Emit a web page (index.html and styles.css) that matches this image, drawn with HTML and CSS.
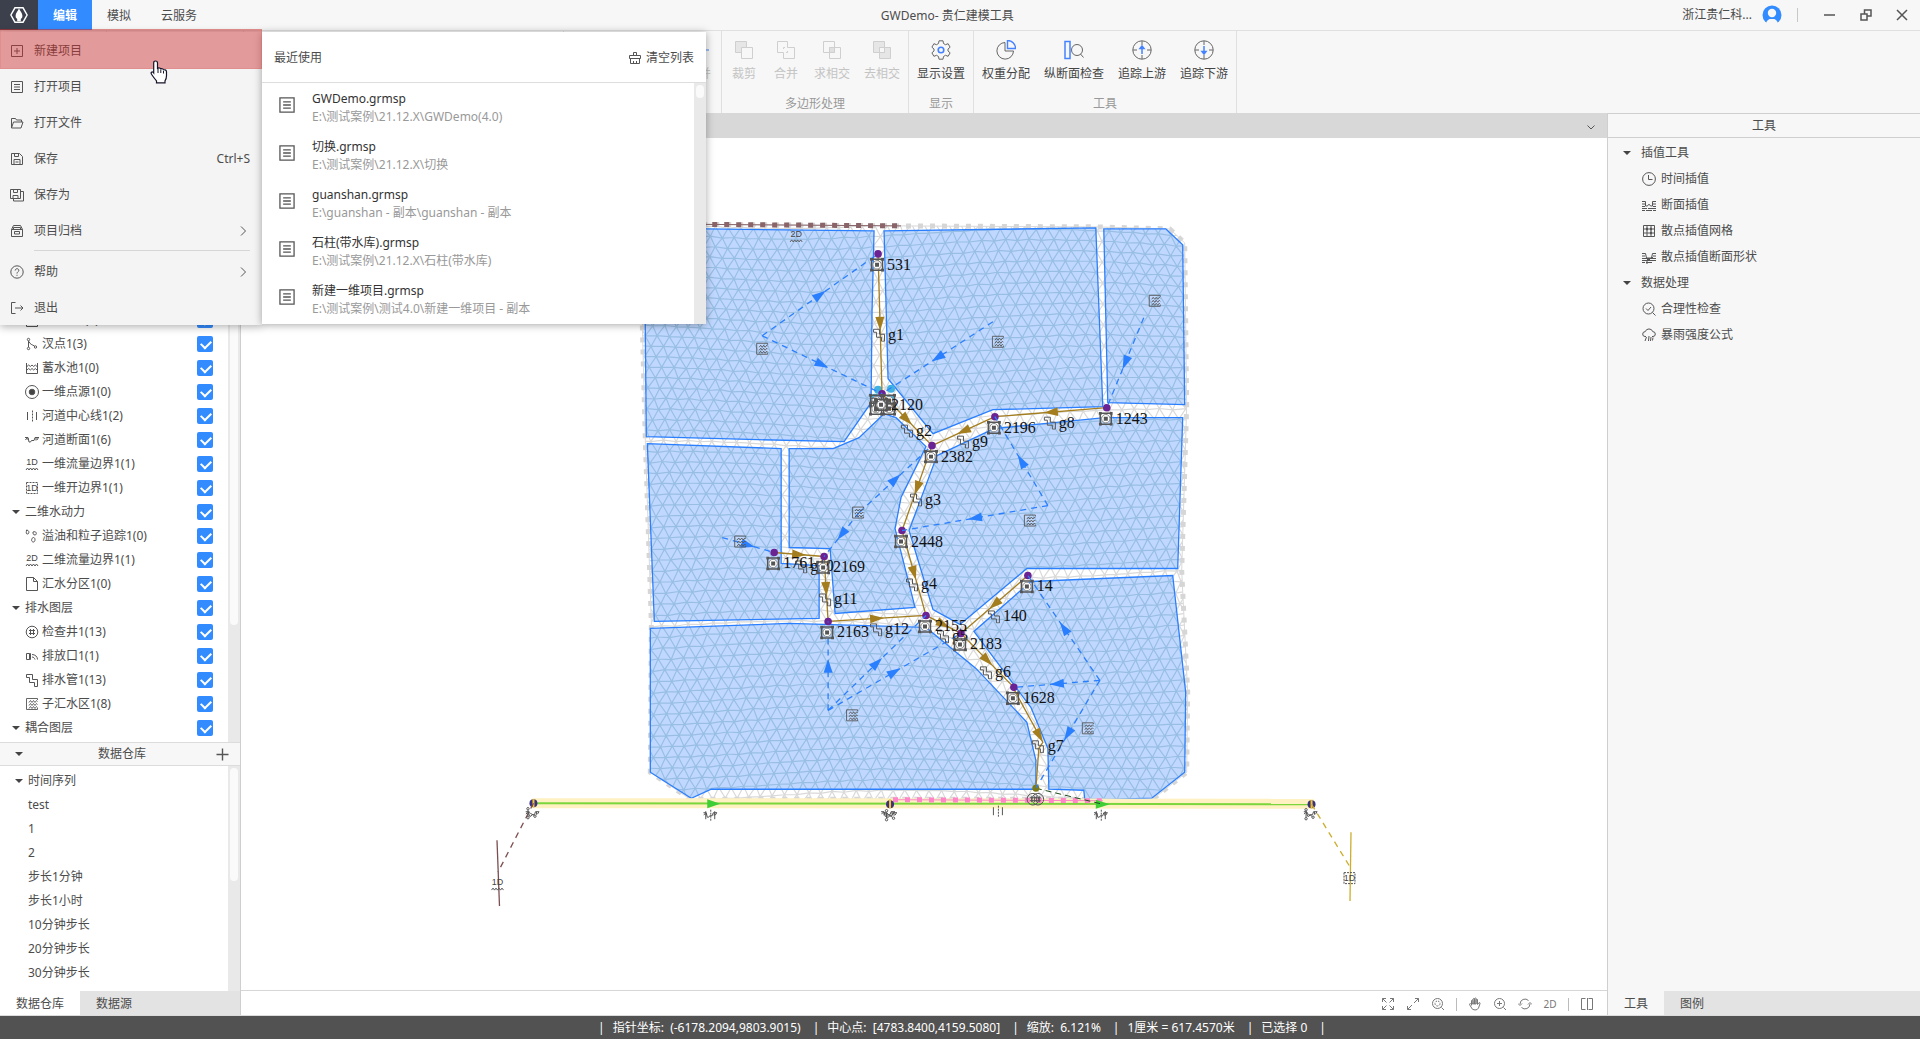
FILE: index.html
```html
<!DOCTYPE html>
<html lang="zh-CN">

<head>
    <meta charset="UTF-8">
    <meta name="viewport" content="width=device-width, initial-scale=1.0">
    <title>GWDemo- 贵仁建模工具</title>
    <link rel="stylesheet" href="styles.css">
</head>

<body>
    <!-- 图标库 -->
    <svg class="sprite" aria-hidden="true">
        <symbol id="i-logo" viewBox="0 0 20 20"><path d="M5.500 2h9L19 10l-4.500 8h-9L1 10z" fill="none" stroke="#fff" stroke-width="1.600"/><path d="M10 2.500c1 3 3.800 5 3.800 8.500a3.800 3.800 0 0 1-1.800 3.500V17H8v-2.500A3.800 3.800 0 0 1 6.200 11C6.200 7.500 9 5.500 10 2.500z" fill="#fff" stroke="none"/></symbol>
        <symbol id="i-new" viewBox="0 0 14 14"><path d="M1.500 1.500h11v11h-11zM7 4v6M4 7h6"/></symbol>
        <symbol id="i-doc" viewBox="0 0 14 14"><path d="M1.500 1.500h11v11h-11zM4 4.500h6M4 7h6M4 9.500h6"/></symbol>
        <symbol id="i-folder" viewBox="0 0 14 14"><path d="M1.500 12V2.500h4l1 1.500h5v2M1.500 12l2-6h9.500l-2 6z"/></symbol>
        <symbol id="i-save" viewBox="0 0 14 14"><path d="M1.500 1.500h8l3 3v8h-11zM4.500 1.500v3h4v-3M4 12.500V7.500h6v5M5.500 10h3"/></symbol>
        <symbol id="i-saveas" viewBox="0 0 14 14"><path d="M.5 1.500h10v9H.5zM3.500 1.500v3h4v-3M3 10.500v-3h5v3M10.500 3.500h3v9.500h-10v-2"/></symbol>
        <symbol id="i-archive" viewBox="0 0 14 14"><path d="M1.500 5.500h11v7h-11zM1.500 5.500l2-4h7l2 4M3.500 5V3.500h7V5M4.500 7.500h5v2.500h-5z"/></symbol>
        <symbol id="i-help" viewBox="0 0 14 14"><circle cx="7" cy="7" r="6.200"/><path d="M5.200 5.500c0-2.400 3.700-2.300 3.600-.1C8.800 6.800 7 6.800 7 8.500M7 9.800v1"/></symbol>
        <symbol id="i-exit" viewBox="0 0 14 14"><path d="M5.500 1.500h-4v11h4M5 7h8M10.500 4.500L13 7l-2.500 2.500"/></symbol>
        <symbol id="i-broom" viewBox="0 0 14 14"><path d="M5.500 4.500v-3h3v3M1.500 4.500h11v3h-11zM2.500 7.500v5h9v-5M5.500 12.500V10M8.500 12.500V10"/></symbol>
        <symbol id="i-right" viewBox="0 0 14 14"><path d="M5 2.500L9.500 7 5 11.500"/></symbol>
        <symbol id="i-down" viewBox="0 0 14 14"><path d="M3.500 5.500L7 9l3.500-3.500"/></symbol>
        <symbol id="i-plus" viewBox="0 0 14 14"><path d="M7.500 1.500v12M1.500 7.500h12" stroke-width="1.400"/></symbol>
        <!-- 图层 -->
        <symbol id="i-fork" viewBox="0 0 14 14"><circle cx="3.500" cy="2.500" r="1.200"/><circle cx="3.500" cy="11.500" r="1.200"/><circle cx="10.500" cy="10" r="1.200"/><path d="M3.500 4v6M4 4.500c1 3 3 3 5.500 4.500"/></symbol>
        <symbol id="i-pond" viewBox="0 0 14 14"><path d="M1.500 2v10.500h11V2M2 5.500l1.700-1.500L5.300 5.500 7 4l1.700 1.500L10.300 4 12 5.500M2 9l1.700-1.500L5.300 9 7 7.500 8.700 9l1.600-1.500L12 9"/></symbol>
        <symbol id="i-point" viewBox="0 0 14 14"><circle cx="7" cy="7" r="6.500"/><circle cx="7" cy="7" r="2.800" fill="#444"/></symbol>
        <symbol id="i-center" viewBox="0 0 14 14"><path d="M2.500 3v8M11.500 3v8"/><path d="M7.500 1.500v11" stroke-dasharray="2 1"/></symbol>
        <symbol id="i-section" viewBox="0 0 14 14"><path d="M0 4.500h3l1 4.500h1.500l1-1.500H9l1-3h4M.5 7l1.500-2M3 7V5M11 4.500v3M13.500 4.500L12 7"/></symbol>
        <symbol id="i-1d" viewBox="0 0 14 14"><text x="7" y="8" class="tiny">1D</text><path d="M1 13l1.500-2L4 13l1.500-2L7 13l1.500-2 1.500 2 1.500-2 1.500 2"/></symbol>
        <symbol id="i-2d" viewBox="0 0 14 14"><text x="7" y="8" class="tiny">2D</text><path d="M1 13l1.500-2L4 13l1.500-2L7 13l1.500-2 1.500 2 1.500-2 1.500 2"/></symbol>
        <symbol id="i-1dbox" viewBox="0 0 14 14"><path d="M1.500 1.500h11v11h-11z" stroke-dasharray="2 1"/><text x="7" y="10" class="tiny">1D</text></symbol>
        <symbol id="i-oil" viewBox="0 0 14 14"><path d="M1.500 1c3 0 3 4 1 4s-1-2-1-4zM8 3c4-1.500 4 3 2 3s-2-1.500-2-3zM8.500 8.500c2 0 2 4.500 0 4.500-3 0-2-4.500 0-4.500z"/></symbol>
        <symbol id="i-page" viewBox="0 0 14 14"><path d="M1.500.5h7l4 4v9h-11zM8.500.5v4h4"/></symbol>
        <symbol id="i-well" viewBox="0 0 14 14"><circle cx="7" cy="7" r="5.800"/><path d="M5.500 4v6M8.500 4v6M4 5.500h6M4 8.500h6"/></symbol>
        <symbol id="i-outlet" viewBox="0 0 14 14"><path d="M1.500 4.500h3v6h-3zM4.500 4.500h1v6h-1M7 5.500c3 0 5.500 2 5.500 5M7 8c1.500 0 2.500 1 3 2.500"/></symbol>
        <symbol id="i-pipe" viewBox="0 0 14 14"><path d="M1.500 1.500h6v5h5v7M1.500 1.500v3h3v5h5v4M9.500 13.500h3"/></symbol>
        <symbol id="i-catch" viewBox="0 0 14 14"><path d="M12.500 3V1.500h-11v11h11V11M4 5.500l1.500-2L7 5.500l1.500-2 1.500 2 1.500-2 1 1M4 8.500l1.500-2L7 8.500l1.500-2 1.500 2 1.500-2 1 1M4 11.500l1.500-2L7 11.500l1.500-2 1.500 2 1.500-2 1 1" stroke-width=".9"/></symbol>
        <!-- 工具 -->
        <symbol id="i-clock" viewBox="0 0 14 14"><circle cx="7" cy="7" r="6.400"/><path d="M6.500 3v4.500h4"/></symbol>
        <symbol id="i-interp" viewBox="0 0 14 14"><path d="M0 3.500h3.500v4.500h2l1-1.500h1l1 1.500h2V3.500H14M0 6h3M11 6h3M0 8.500h3M11 8.500h3M0 10.500h5M6 10.500h8M0 12.500h3M4 12.500h6M11 12.500h3"/></symbol>
        <symbol id="i-grid" viewBox="0 0 14 14"><path d="M1.500 1.500h11v11h-11zM5 1.500v11M9 1.500v11M1.500 5h11M1.500 9h11"/><path d="M4 5h2M8 9h2M8 5h2" stroke-width="2.500"/></symbol>
        <symbol id="i-scatter" viewBox="0 0 14 14"><path d="M0 3.500h3.500l1 4.500h5l1-4.500H14M0 6h3M11 6h3M0 8.500h14M0 10.500h14M0 12.500h3M4 12.500h6M5 11v3"/><path d="M5 10h3M9 8h2" stroke-width="2"/></symbol>
        <symbol id="i-check" viewBox="0 0 14 14"><circle cx="6.500" cy="6.500" r="5.500"/><path d="M4 6.500l2 2 3-3.500M10.500 10.500l3 3"/></symbol>
        <symbol id="i-rain" viewBox="0 0 14 14"><path d="M4 8.500H3a2.400 2.400 0 0 1 .2-4.800 4 4 0 0 1 7.600 0 2.400 2.400 0 0 1 .2 4.800h-1M4.500 9L3 13M7 8l-.5 5M9 9l-.5 4M11 9.500l-.5 3"/></symbol>
        <!-- 视图 -->
        <symbol id="i-full" viewBox="0 0 14 14"><path d="M1.500 5V1.500H5M1.500 1.500l4 4M9 1.500h3.500V5M12.500 1.500l-4 4M1.500 9v3.500H5M1.500 12.500l4-4M9 12.500h3.500V9M12.500 12.500l-4-4"/></symbol>
        <symbol id="i-expand" viewBox="0 0 14 14"><path d="M9 1.500h3.500V5M12.500 1.500l-4.500 4.500M1.500 9v3.500H5M1.500 12.500L6 8"/></symbol>
        <symbol id="i-target" viewBox="0 0 14 14"><circle cx="6.500" cy="6.500" r="5"/><circle cx="6.500" cy="6.500" r="2.500" stroke-dasharray="2 1"/><path d="M10.500 10.500l2.500 2.500"/></symbol>
        <symbol id="i-hand" viewBox="0 0 14 14"><path d="M3.500 8.500V3.500q1-1 1.500 0V7M5 7V2q1-1 1.500 0v5M6.500 7V1.500q1-1 1.500 0V7M8 7V2.500q1-1 1.500 0V7.500l1.500-1.800q1.500-.2 1 1L10.500 11q-1 2-3.500 2-3 0-4-3L1.500 7.500q0-1 1-.8z"/></symbol>
        <symbol id="i-zoomin" viewBox="0 0 14 14"><circle cx="6.500" cy="6.500" r="5"/><path d="M10.500 10.500l2.500 2.500M6.500 4v5M4 6.500h5"/></symbol>
        <symbol id="i-rotate" viewBox="0 0 14 14"><path d="M2 7a5 5 0 0 1 8.500-3.500M12 7a5 5 0 0 1-8.500 3.500M0 6.500l2 2 2-2M10 7.500l2-2 2 2"/></symbol>
        <symbol id="i-split" viewBox="0 0 14 14"><path d="M5.500 1.500h-4v11h4M8.500 1.500h4v11h-4M7.500 1v12"/></symbol>
        <symbol id="i-manhole" viewBox="0 0 14 14"><path d="M1.500 1.500h11v11h-11z" stroke-width="1.500"/><circle cx="7" cy="7" r="4.200" fill="#fff" stroke="#888"/><path d="M5 5h4v4H5zM0 0h3v3H0zM11 0h3v3h-3zM0 11h3v3H0zM11 11h3v3h-3z" fill="#555" stroke="none"/></symbol>
    </svg>

    <header class="titlebar">
        <span class="logo"><svg><use href="#i-logo"/></svg></span>
        <nav class="menubar">
            <button type="button" class="current">编辑</button>
            <button type="button">模拟</button>
            <button type="button">云服务</button>
        </nav>
        <h1>GWDemo- 贵仁建模工具</h1>
        <div class="account">
            <span>浙江贵仁科...</span>
            <svg class="avatar" viewBox="0 0 20 20"><circle cx="10" cy="10" r="9.500" fill="#338cff"/><path d="M4 20c0-4 2-5 3.500-6h5c1.500 1 3.500 2 3.500 6z" fill="#f7f7f7"/><circle cx="10" cy="8" r="4.200" fill="#f7f7f7"/></svg>
        </div>
        <div class="win-btns">
            <button type="button" aria-label="最小化"><svg viewBox="0 0 12 12"><path d="M0 6h11"/></svg></button>
            <button type="button" aria-label="还原"><svg viewBox="0 0 12 12"><path d="M1 5h6v6H1zM4.500 5V1H11v6H7"/></svg></button>
            <button type="button" aria-label="关闭"><svg viewBox="0 0 12 12"><path d="M1 1l10 10M11 1L1 11"/></svg></button>
        </div>

        <!-- 编辑菜单 -->
        <div class="menu">
            <ul class="commands">
                <li class="hot"><a href="#"><svg><use href="#i-new"/></svg>新建项目</a></li>
                <li><a href="#"><svg><use href="#i-doc"/></svg>打开项目</a></li>
                <li><a href="#"><svg><use href="#i-folder"/></svg>打开文件</a></li>
                <li><a href="#"><svg><use href="#i-save"/></svg>保存<kbd>Ctrl+S</kbd></a></li>
                <li><a href="#"><svg><use href="#i-saveas"/></svg>保存为</a></li>
                <li><a href="#"><svg><use href="#i-archive"/></svg>项目归档<svg class="more"><use href="#i-right"/></svg></a></li>
                <li class="line"></li>
                <li><a href="#"><svg><use href="#i-help"/></svg>帮助<svg class="more"><use href="#i-right"/></svg></a></li>
                <li><a href="#"><svg><use href="#i-exit"/></svg>退出</a></li>
            </ul>
            <section class="recent">
                <div class="recent-head">
                    <h2>最近使用</h2>
                    <button type="button"><svg><use href="#i-broom"/></svg>清空列表</button>
                </div>
                <div class="recent-body">
                    <ul>
                        <li><svg><use href="#i-doc"/></svg><a href="#">GWDemo.grmsp<small>E:\测试案例\21.12.X\GWDemo(4.0)</small></a></li>
                        <li><svg><use href="#i-doc"/></svg><a href="#">切换.grmsp<small>E:\测试案例\21.12.X\切换</small></a></li>
                        <li><svg><use href="#i-doc"/></svg><a href="#">guanshan.grmsp<small>E:\guanshan - 副本\guanshan - 副本</small></a></li>
                        <li><svg><use href="#i-doc"/></svg><a href="#">石柱(带水库).grmsp<small>E:\测试案例\21.12.X\石柱(带水库)</small></a></li>
                        <li><svg><use href="#i-doc"/></svg><a href="#">新建一维项目.grmsp<small>E:\测试案例\测试4.0\新建一维项目 - 副本</small></a></li>
                    </ul>
                    <div class="scroll"><i class="thumb-recent"></i></div>
                </div>
            </section>
            <svg class="cursor" viewBox="0 0 18 24"><path d="M5.500 1q2 0 2 2v6q.5-1.500 2-1t1 1.500q.5-1.200 1.800-.8t1.200 1.600q.5-.8 1.700-.4t1.300 1.900v4q0 3-1.500 5v2H6.500v-2Q4 18 2 15q-1.500-2-.5-2.800t2.200.8V3q0-2 1.800-2z" fill="#fff" stroke="#14142a" stroke-width="1.200"/><path d="M8 9v4M10.800 10v3M13.500 11v2.500" stroke="#14142a"/></svg>
        </div>
    </header>

    <div class="ribbon">
        <div class="group w-file"></div>
        <div class="group w-edit"></div>
        <div class="group w-draw"></div>
        <div class="group w-line">
            <div class="items">
                <button type="button" disabled><svg viewBox="0 0 20 20"><path class="blue" d="M0 10h20"/></svg>合并</button>
            </div>
        </div>
        <div class="group">
            <div class="items">
                <button type="button" disabled><svg viewBox="0 0 20 20"><path d="M1.500 1.500h11v11h-11z" fill="#e6e6e6"/><path d="M7.500 7.500h11v11h-11z" fill="#f7f7f7"/></svg>裁剪</button>
                <button type="button" disabled><svg viewBox="0 0 20 20"><path d="M1.500 1.500h10v6h7v11h-11v-6h-6zM7.500 9v-1.500H9M10 12.500h1.500V11"/></svg>合并</button>
                <button type="button" disabled><svg viewBox="0 0 20 20"><path d="M1.500 1.500h11v11h-11zM7.500 7.500h11v11h-11z"/><path d="M7.500 7.500h5v5h-5z" fill="#e0e0e0"/></svg>求相交</button>
                <button type="button" disabled><svg viewBox="0 0 20 20"><path d="M1.500 1.500h11v11h-11zM7.500 7.500h11v11h-11z" fill="#e6e6e6"/><path d="M7.500 7.500h5v5h-5z" fill="#f7f7f7"/></svg>去相交</button>
            </div>
            <p>多边形处理</p>
        </div>
        <div class="group">
            <div class="items">
                <button type="button"><svg viewBox="0 0 20 20"><path d="M8 .8h4l.5 2.700 2 1.200 2.600-1 2 3.500L17 9v2l2.100 1.800-2 3.500-2.600-1-2 1.200-.5 2.700H8l-.5-2.700-2-1.200-2.600 1-2-3.500L3 11V9L.9 7.200l2-3.500 2.600 1 2-1.200z"/><circle class="blue" cx="10" cy="10" r="2.800" stroke-width="1.600"/></svg>显示设置</button>
            </div>
            <p>显示</p>
        </div>
        <div class="group">
            <div class="items">
                <button type="button"><svg viewBox="0 0 20 20"><path d="M9 2.500a8.300 8.300 0 1 0 8.500 8.500H9z"/><path class="blue" d="M11.500.5v8h8a8 8 0 0 0-8-8z" stroke-width="1.400"/></svg>权重分配</button>
                <button type="button"><svg viewBox="0 0 20 20"><path class="blue" d="M1 1.500h5v17H1z" stroke-width="1.500"/><circle cx="13" cy="10" r="5.500"/><path d="M16.500 14l3 3.500"/></svg>纵断面检查</button>
                <button type="button"><svg viewBox="0 0 20 20"><circle cx="10" cy="10" r="9.200"/><path d="M10 1v4M10 15v4M1 10h4M15 10h4"/><path class="blue" d="M10 14V7M8 8.500l2-2.500 2 2.500z" stroke-width="1.500"/></svg>追踪上游</button>
                <button type="button"><svg viewBox="0 0 20 20"><circle cx="10" cy="10" r="9.200"/><path d="M10 1v4M10 15v4M1 10h4M15 10h4"/><path class="blue" d="M10 6v7M8 11.500l2 2.500 2-2.500z" stroke-width="1.500"/></svg>追踪下游</button>
            </div>
            <p>工具</p>
        </div>
    </div>

    <main class="workspace">
        <aside class="left">
            <div class="layers">
                <ul class="tree" id="layers"></ul>
                <div class="scroll"><i class="thumb-layers"></i></div>
            </div>
            <div class="panel-head">
                <i class="caret"></i>
                <h2>数据仓库</h2>
                <button type="button" aria-label="添加"><svg><use href="#i-plus"/></svg></button>
            </div>
            <div class="store">
                <ul>
                    <li class="parent"><i class="caret"></i>时间序列</li>
                    <li>test</li>
                    <li>1</li>
                    <li>2</li>
                    <li>步长1分钟</li>
                    <li>步长1小时</li>
                    <li>10分钟步长</li>
                    <li>20分钟步长</li>
                    <li>30分钟步长</li>
                </ul>
                <div class="scroll"><i class="thumb-store"></i></div>
            </div>
            <div class="tabs">
                <button type="button" class="current">数据仓库</button>
                <button type="button">数据源</button>
            </div>
        </aside>

        <section class="view">
            <div class="doc-tabs"><svg><use href="#i-down"/></svg></div>
            <svg class="map" id="map" viewBox="241 137 1366 853">
                <defs>
                    <clipPath id="clip-outer"><path id="outer" d="M642 223L900 225 1096 226 1170 228 1185 242 1187 405 1182 570 1188 692 1187 772 1153 799 690 799 650 772 651 622 645 440 642 325z"/></clipPath>
                    <clipPath id="clip-zones"><path d="" id="zones-clip"/></clipPath>
                </defs>
                <path id="mesh-gray" class="mesh" clip-path="url(#clip-outer)"/>
                <use href="#outer" class="edge"/>
                <use href="#outer" class="edge-dots"/>
                <path id="zones" class="zones"/>
                <path id="mesh-blue" class="mesh blue-mesh" clip-path="url(#clip-zones)"/>
                <path id="zones-line" class="zones-line"/>
                <path class="bound-2d" d="M640 223L901 225"/>
                <path class="bound-2d dots" d="M640 223L904 225"/>
                <!-- 河道 -->
                <path class="band" d="M532 803L1314 803.500"/>
                <path class="river" d="M533 803L1312 804"/>
                <path class="pink" d="M895 799.500L1103 800.500"/>
                <path class="pink dots" d="M893 799.500L1106 800.500"/>
                <path class="river-arrow" d="M707 799l13 4.500-13 4.500zM1096 799.500l14 4.500-14 4.500z"/>
                <g class="ends"><circle cx="533" cy="803" r="4"/><circle cx="890" cy="804" r="4"/><circle cx="1312" cy="804" r="4"/><path d="M533 799v8M890 799v9M1312 800v8"/></g>
                <path class="couple" d="M1036 788L1103 804"/>
                <path class="flow-in" d="M496.500 840L499 906"/>
                <path class="flow-in dash" d="M533 803L497.500 872"/>
                <path class="flow-out" d="M1351.500 832L1350.500 901"/>
                <path class="flow-out dash" d="M1312 804L1350 866"/>
                <g class="cyan"><circle cx="878" cy="389" r="4"/><circle cx="891" cy="388" r="4"/><circle cx="875" cy="397" r="4"/><circle cx="890" cy="398" r="4"/></g>
                <g id="net"></g>
            </svg>
            <div class="view-tools">
                <button type="button" aria-label="全图"><svg><use href="#i-full"/></svg></button>
                <button type="button" aria-label="缩放"><svg><use href="#i-expand"/></svg></button>
                <button type="button" aria-label="定位"><svg><use href="#i-target"/></svg></button>
                <i></i>
                <button type="button" aria-label="平移"><svg><use href="#i-hand"/></svg></button>
                <button type="button" aria-label="放大"><svg><use href="#i-zoomin"/></svg></button>
                <button type="button" aria-label="刷新"><svg><use href="#i-rotate"/></svg></button>
                <button type="button">2D</button>
                <i></i>
                <button type="button" aria-label="分屏"><svg><use href="#i-split"/></svg></button>
            </div>
        </section>

        <aside class="right">
            <h2>工具</h2>
            <ul class="tools">
                <li class="parent"><i class="caret"></i>插值工具</li>
                <li><svg><use href="#i-clock"/></svg>时间插值</li>
                <li><svg><use href="#i-interp"/></svg>断面插值</li>
                <li><svg><use href="#i-grid"/></svg>散点插值网格</li>
                <li><svg><use href="#i-scatter"/></svg>散点插值断面形状</li>
                <li class="parent"><i class="caret"></i>数据处理</li>
                <li><svg><use href="#i-check"/></svg>合理性检查</li>
                <li><svg><use href="#i-rain"/></svg>暴雨强度公式</li>
            </ul>
            <div class="tabs">
                <button type="button" class="current">工具</button>
                <button type="button">图例</button>
            </div>
        </aside>
    </main>

    <footer class="status">
        <span>指针坐标:&nbsp; (-6178.2094,9803.9015)</span>
        <span>中心点:&nbsp; [4783.8400,4159.5080]</span>
        <span>缩放:&nbsp; 6.121%</span>
        <span>1厘米 = 617.4570米</span>
        <span>已选择 0</span>
    </footer>
    <script src="map.js"></script>
</body>

</html>
```
FILE: styles.css
```css
* {
    margin: 0;
    padding: 0;
    box-sizing: border-box;
}

body {
    display: flex;
    flex-direction: column;
    height: 100vh;
    overflow: hidden;
    font: 12px/18px "Noto Sans", "Noto Sans CJK SC", sans-serif;
    color: #4c4c4c;
    background: #f7f7f7;
}

ul {
    list-style: none;
}

a {
    color: inherit;
    text-decoration: none;
}

h1, h2 {
    font-size: 12px;
    font-weight: normal;
}

button {
    border: none;
    background: none;
    font: inherit;
    color: inherit;
}

svg {
    flex: none;
    display: block;
    width: 14px;
    height: 14px;
    fill: none;
    stroke: #555;
}

.sprite {
    display: none;
}

.tiny {
    font: 9px "Liberation Sans", sans-serif;
    text-anchor: middle;
    fill: #444;
    stroke: none;
}

.caret {
    border: 4px solid transparent;
    border-top-color: #444;
    border-bottom: none;
}

.scroll {
    flex: none;
    width: 12px;
    padding: 2px;
    background: #e9e9e9;
}

.scroll i {
    display: block;
    border-radius: 4px;
    background: #fafafa;
}

/* 标题栏 */
.titlebar {
    position: relative;
    z-index: 2;
    flex: none;
    display: flex;
    height: 31px;
    border-bottom: 1px solid #e0e0e0;
}

.logo {
    display: flex;
    align-items: center;
    justify-content: center;
    width: 38px;
    background: #3c404d;
}

.logo svg {
    width: 20px;
    height: 18px;
}

.menubar {
    display: flex;
}

.menubar button {
    padding: 2px 15px 0;
}

.menubar .current {
    background: #338cff;
    color: #fff;
    font-weight: bold;
}

.titlebar h1 {
    flex: 1;
    line-height: 32px;
    text-align: center;
}

.account {
    display: flex;
    align-items: center;
    gap: 10px;
}

.account .avatar {
    width: 20px;
    height: 20px;
    stroke: none;
}

.win-btns {
    display: flex;
    align-items: center;
    align-self: center;
    gap: 24px;
    height: 14px;
    margin-left: 15px;
    padding: 0 12px 0 26px;
    border-left: 1px solid #c8c8c8;
}

.win-btns svg {
    width: 12px;
    height: 12px;
    stroke-width: 1.5;
}

/* 下拉菜单 */
.menu {
    position: absolute;
    top: 32px;
    left: 0;
    display: flex;
    align-items: flex-start;
}

.commands {
    width: 262px;
    background: #f4f4f4;
    box-shadow: 0 2px 8px rgba(0, 0, 0, .3);
}

.commands a {
    display: flex;
    align-items: center;
    height: 36px;
    padding: 2px 12px 0 10px;
}

.commands a svg {
    margin-right: 10px;
}

.commands a .more {
    margin: 0 0 0 auto;
}

.commands kbd {
    margin-left: auto;
    font: inherit;
}

.commands .line {
    height: 1px;
    margin: 2px 12px 2px 34px;
    background: #d6d6d6;
}

.commands .hot {
    position: relative;
}

.commands .hot::after {
    content: "";
    position: absolute;
    inset: -3px 0 -1px;
    border: 1px solid rgba(206, 44, 44, .1);
    background: rgba(206, 44, 44, .45);
}

.recent {
    width: 444px;
    background: #fff;
    box-shadow: 0 1px 8px rgba(0, 0, 0, .35);
}

.recent-head {
    display: flex;
    align-items: center;
    justify-content: space-between;
    height: 51px;
    padding: 2px 12px 0;
    border-bottom: 1px solid #dedede;
}

.recent-head button {
    display: flex;
    align-items: center;
    gap: 4px;
}

.recent-body {
    display: flex;
    height: 241px;
}

.recent-body ul {
    flex: 1;
    padding-top: 7px;
}

.recent-body li {
    display: flex;
    gap: 16px;
    height: 36px;
    margin-bottom: 12px;
    padding-left: 16px;
}

.recent-body li svg {
    width: 18px;
    height: 18px;
    margin-top: 6px;
}

.recent-body li a {
    line-height: 18px;
    color: #333;
}

.recent-body small {
    display: block;
    font-size: 12px;
    color: #999;
}

.thumb-recent {
    height: 13px;
}

.cursor {
    position: absolute;
    left: 150px;
    top: 28px;
    width: 18px;
    height: 24px;
}

/* 功能区 */
.ribbon {
    flex: none;
    display: flex;
    height: 82px;
}

.group {
    display: flex;
    flex-direction: column;
    justify-content: space-between;
    padding: 9px 8px 0;
    border-right: 1px solid #e0e0e0;
}

.w-file {
    width: 107px;
}

.w-edit {
    width: 137px;
}

.w-draw {
    width: 320px;
}

.w-line {
    width: 158px;
    align-items: flex-end;
}

.group .items {
    display: flex;
    gap: 14px;
}

.group button {
    display: flex;
    flex-direction: column;
    align-items: center;
    gap: 5px;
    min-width: 28px;
    color: #444;
}

.group button:disabled {
    color: #c4c4c4;
}

.group svg {
    width: 20px;
    height: 20px;
    stroke: #666;
}

.group button:disabled svg {
    stroke: #cfcfcf;
}

.group .blue, .group button:disabled .blue {
    stroke: #4582ff;
}

.group p {
    line-height: 18px;
    text-align: center;
    color: #999;
}

/* 主体 */
.workspace {
    flex: 1;
    display: flex;
    min-height: 0;
}

.left {
    display: flex;
    flex-direction: column;
    width: 241px;
    border-right: 1px solid #cfcfcf;
    background: #fff;
}

.layers {
    flex: 1;
    display: flex;
    min-height: 0;
}

.tree {
    flex: 1;
    display: flex;
    flex-direction: column;
    justify-content: flex-end;
    padding-bottom: 2px;
}

.tree li {
    display: flex;
    align-items: center;
    gap: 3px;
    height: 24px;
    padding: 0 15px 0 25px;
}

.tree .parent {
    gap: 5px;
    padding-left: 12px;
}

.tree label {
    flex: 1;
    line-height: 26px;
}

.tree input {
    appearance: none;
    position: relative;
    width: 16px;
    height: 16px;
    border-radius: 2px;
    background: #338cff;
}

.tree input::after {
    content: "";
    position: absolute;
    left: 4px;
    top: 4px;
    width: 8px;
    height: 5px;
    border: solid #fff;
    border-width: 0 0 2px 2px;
    transform: rotate(-45deg);
}

.thumb-layers {
    height: 510px;
}

.panel-head {
    display: flex;
    align-items: center;
    height: 24px;
    padding: 0 11px 0 15px;
    border: solid #dcdcdc;
    border-width: 1px 0;
    background: #f7f7f7;
}

.panel-head h2 {
    flex: 1;
    padding-left: 6px;
    text-align: center;
}

.store {
    display: flex;
    height: 225px;
}

.store ul {
    flex: 1;
    padding-top: 3px;
}

.store li {
    height: 24px;
    padding-left: 28px;
    line-height: 24px;
}

.store .parent {
    display: flex;
    align-items: center;
    gap: 5px;
    padding-left: 15px;
}

.thumb-store {
    height: 113px;
}

.tabs {
    display: flex;
    height: 24px;
    background: #e3e3e3;
}

.tabs button {
    padding: 2px 16px 0;
}

.tabs .current {
    background: #fff;
}

/* 地图 */
.view {
    flex: 1;
    display: flex;
    flex-direction: column;
    min-width: 0;
    background: #fff;
}

.doc-tabs {
    display: flex;
    align-items: center;
    justify-content: flex-end;
    height: 25px;
    padding: 2px 9px 0 0;
    background: #d8d8d8;
}

.map {
    flex: 1;
    width: 100%;
    min-height: 0;
}

.view-tools {
    display: flex;
    align-items: center;
    justify-content: flex-end;
    gap: 11px;
    height: 25px;
    padding: 2px 13px 0 0;
    border-top: 1px solid #d6d6d6;
}

.view-tools button {
    width: 14px;
    color: #777;
    font-size: 10px;
}

.view-tools svg {
    stroke: #777;
}

.view-tools i {
    width: 1px;
    height: 13px;
    background: #bbb;
}

.mesh {
    stroke: #d9d9d9;
    stroke-width: 1.2;
}

.blue-mesh {
    stroke: #98bee4;
}

.edge {
    stroke: #d9d9d9;
}

.edge-dots {
    stroke: #d6d6d6;
    stroke-width: 5;
    stroke-dasharray: 5 7;
}

.zones {
    fill: #c0d8ff;
    stroke: none;
}

.zones-line {
    stroke: #2a7fff;
    stroke-width: 1.3;
}

.bound-2d {
    stroke: #8a6468;
}

.pink {
    stroke: #ff85c8;
}

.dots {
    stroke-width: 5;
    stroke-dasharray: 5 7;
}

.band {
    stroke: #fff1c2;
    stroke-width: 10;
}

.river {
    stroke: #7bd63c;
    stroke-width: 2;
}

.river-arrow {
    fill: #3fce35;
    stroke: none;
}

.ends circle {
    fill: #3a3280;
    stroke: none;
}

.ends path {
    stroke: #f5c52c;
    stroke-width: 2;
}

.couple {
    stroke: #1e4a1e;
    stroke-dasharray: 6 4;
}

.flow-in {
    stroke: #7d4e50;
    stroke-width: 1.3;
}

.flow-out {
    stroke: #ccae2e;
    stroke-width: 1.3;
}

.dash {
    stroke-dasharray: 6 5;
}

.cyan {
    fill: #3fb2e2;
    stroke: none;
}

.pipe {
    stroke: #a37d1e;
    stroke-width: 1.3;
}

.pipe-arrow {
    fill: #a37d1e;
    stroke: none;
}

.link {
    stroke: #2a7fff;
    stroke-width: 1.3;
    stroke-dasharray: 6 5;
}

.link-arrow {
    fill: #2a7fff;
    stroke: none;
}

.node {
    fill: #6b2394;
    stroke: none;
}

.outfall {
    fill: #7d7a12;
    stroke: none;
}

.mark {
    font: 16px "Liberation Serif", serif;
    fill: #111;
    stroke: none;
}

/* 右侧工具 */
.right {
    display: flex;
    flex-direction: column;
    width: 313px;
    border: solid #cfcfcf;
    border-width: 1px 0 0 1px;
}

.right h2 {
    height: 24px;
    line-height: 23px;
    text-align: center;
    border-bottom: 1px solid #cfcfcf;
}

.tools {
    flex: 1;
    padding-top: 2px;
}

.tools li {
    display: flex;
    align-items: center;
    gap: 5px;
    height: 26px;
    padding-left: 34px;
}

.tools .parent {
    gap: 10px;
    padding-left: 15px;
}

.right .current {
    background: #f7f7f7;
}

/* 状态栏 */
.status {
    flex: none;
    display: flex;
    justify-content: center;
    height: 24px;
    line-height: 24px;
    border-top: 1px solid #dcdcdc;
    background: #525252;
    color: #fff;
}

.status span::before, .status span:last-child::after {
    content: "|";
    margin: 0 8px 0 12px;
}
```
FILE: map.js
```js
// 图层：名称、图标（没有图标的是分组）
var layers = [
    ['内边界1(0)', 'page'],
    ['汊点1(3)', 'fork'],
    ['蓄水池1(0)', 'pond'],
    ['一维点源1(0)', 'point'],
    ['河道中心线1(2)', 'center'],
    ['河道断面1(6)', 'section'],
    ['一维流量边界1(1)', '1d'],
    ['一维开边界1(1)', '1dbox'],
    ['二维水动力'],
    ['溢油和粒子追踪1(0)', 'oil'],
    ['二维流量边界1(1)', '2d'],
    ['汇水分区1(0)', 'page'],
    ['排水图层'],
    ['检查井1(13)', 'well'],
    ['排放口1(1)', 'outlet'],
    ['排水管1(13)', 'pipe'],
    ['子汇水区1(8)', 'catch'],
    ['耦合图层']
];

document.getElementById('layers').innerHTML = layers.map(function (item, i) {
    var icon = item[1] ? '<svg><use href="#i-' + item[1] + '"/></svg>' : '<i class="caret"></i>';
    return '<li' + (item[1] ? '' : ' class="parent"') + '>' + icon +
        '<label for="layer' + i + '">' + item[0] + '</label>' +
        '<input type="checkbox" id="layer' + i + '" checked></li>';
}).join('');

// 子汇水区
var zones = [
    'M644 228L706 228 874 230 872 310 871 402 844 441 758 439 646 436z',
    'M884 230L1096 227 1103 406 993 409 933 433 888 378z',
    'M1104 228L1166 228 1183 244 1185 404 1108 402z',
    'M647 443L781 448 781 563 819 565 819 618 654 621z',
    'M789 448L833 448 859 437 884 413 896 417 926 446 901 497 895 528 915 607 835 613 830 548 789 547z',
    'M937 455L994 428 1105 417 1183 417 1178 568 1027 568 960 624 933 609 909 530z',
    'M1031 581L1173 575 1186 692 1185 772 1152 798 1085 800 1084 790 1049 789 1048 748 1031 707 974 631z',
    'M650 628L789 623 926 627 976 668 1027 722 1036 760 1036 789 711 789 691 798 650 772z'
].join('');

['zones', 'zones-clip', 'zones-line'].forEach(function (id) {
    document.getElementById(id).setAttribute('d', zones);
});

// 三角网格，节点位置带一点扰动
function meshPoint(row, col) {
    var x = 630 + col * 12.4 + (row % 2) * 6.2,
        y = 212 + row * 10.6;
    return [
        (x + 5 * Math.sin(y / 75 + x / 150) + 0.7 * Math.sin(row * 3.7 + col * 5.3)).toFixed(1),
        (y + 5 * Math.sin(x / 80 - y / 120) + 0.7 * Math.sin(row * 6.1 + col * 2.9)).toFixed(1)
    ];
}

function drawMesh() {
    var d = '';
    for (var row = 0; row < 58; row++) {
        for (var col = 0; col < 47; col++) {
            var p = meshPoint(row, col),
                shift = row % 2;
            d += 'M' + p + 'L' + meshPoint(row, col + 1);
            d += 'M' + meshPoint(row + 1, col - 1 + shift) + 'L' + p + 'L' + meshPoint(row + 1, col + shift);
        }
    }
    document.getElementById('mesh-gray').setAttribute('d', d);
    document.getElementById('mesh-blue').setAttribute('d', d);
}

// 检查井
var nodes = {
    531: [878, 253], 2120: [882, 393], 2382: [932, 445], 2196: [995, 416], 1243: [1107, 407],
    2448: [902, 530], 1761: [774, 552], 2169: [824, 556], 2163: [828, 621], 2155: [926, 615],
    2183: [961, 633], 14: [1028, 575], 1628: [1014, 687]
};
var outfall = [1036, 788];

// 排水管：名称、起点、终点、图标位置
var pipes = [
    ['g1', 531, 2120, 879, 334], ['g2', 2120, 2382, 907, 430], ['g9', 2196, 2382, 963, 441],
    ['g8', 1243, 2196, 1050, 422], ['g3', 2382, 2448, 916, 499], ['g4', 2448, 2155, 912, 584],
    ['g10', 1761, 2169, 801, 566], ['g11', 2169, 2163, 825, 599], ['g12', 2163, 2155, 876, 629],
    ['g5', 2155, 2183, 943, 636], ['140', 14, 2183, 994, 616], ['g6', 2183, 1628, 986, 672]
];

// 汇流方向
var links = [
    [762, 335, 531], [762, 335, 2120], [993, 321, 2120], [1144, 317, 1243],
    [859, 512, 2382], [859, 512, 2169], [1048, 505, 2196], [1048, 505, 2448],
    [722, 537, 1761], [828, 710, 2163], [828, 710, 2155], [828, 710, 2183],
    [1100, 680, 14], [1100, 680, 1628], [1100, 680, 0]
];

var symbols = [
    ['catch', 762, 348], ['catch', 998, 341], ['catch', 1155, 300], ['catch', 858, 512],
    ['catch', 1030, 520], ['catch', 740, 541], ['catch', 852, 715], ['catch', 1088, 728],
    ['2d', 796, 235], ['1d', 497, 884], ['1dbox', 1350, 878], ['center', 998, 811],
    ['section', 532, 814], ['section', 710, 815], ['section', 890, 815], ['section', 888, 814],
    ['section', 1101, 815], ['section', 1311, 814], ['center', 710, 815], ['center', 1101, 815],
    ['fork', 531, 813], ['fork', 890, 815], ['fork', 1310, 814],
    ['well', 1033, 799], ['well', 1038, 799],
    ['manhole', 876, 400], ['manhole', 889, 400], ['manhole', 876, 408], ['manhole', 889, 408],
    ['pipe', 876, 403], ['pipe', 890, 404]
];

function use(name, x, y) {
    return '<use href="#i-' + name + '" x="' + (x - 7) + '" y="' + (y - 7) + '" width="14" height="14"/>';
}

function mark(text, x, y) {
    return '<text class="mark" x="' + x + '" y="' + (y + 5) + '">' + text + '</text>';
}

function arrow(cls, a, b) {
    var angle = Math.atan2(b[1] - a[1], b[0] - a[0]) * 180 / Math.PI;
    return '<path class="' + cls + '" d="M-7 -4.500L7 0L-7 4.500z" transform="translate(' +
        (a[0] + b[0]) / 2 + ' ' + (a[1] + b[1]) / 2 + ') rotate(' + angle + ')"/>';
}

function drawNet() {
    var html = '', labels = '';
    pipes.forEach(function (p) {
        var a = nodes[p[1]], b = nodes[p[2]];
        html += '<path class="pipe" d="M' + a + 'L' + b + '"/>' + arrow('pipe-arrow', a, b);
        labels += use('pipe', p[3], p[4]) + mark(p[0], p[3] + 9, p[4]);
    });
    // g7 有转折
    html += '<path class="pipe" d="M1013 687L1043 742L1039 748L1036 788"/>' + arrow('pipe-arrow', [1036, 729], [1043, 742]);
    labels += use('pipe', 1038, 746) + mark('g7', 1048, 746);

    Object.keys(nodes).forEach(function (id) {
        var n = nodes[id];
        html += '<circle class="node" cx="' + n[0] + '" cy="' + n[1] + '" r="3.800"/>';
        labels += use('manhole', n[0] - 1, n[1] + 11) + mark(id, n[0] + 9, n[1] + 11);
    });
    html += '<circle class="outfall" cx="1036" cy="788" r="3.500"/>';

    links.forEach(function (l) {
        var a = [l[0], l[1]], b = nodes[l[2]] || outfall;
        html += '<path class="link" d="M' + a + 'L' + b + '"/>' + arrow('link-arrow', a, b);
    });
    symbols.forEach(function (s) {
        html += use(s[0], s[1], s[2]);
    });
    document.getElementById('net').innerHTML = html + labels;
}

drawMesh();
drawNet();
```
